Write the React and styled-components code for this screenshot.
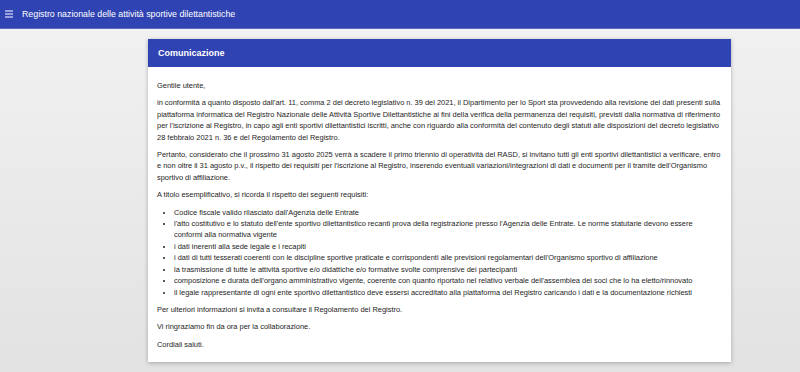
import React from "react";
import styled, { createGlobalStyle } from "styled-components";

const GlobalStyle = createGlobalStyle`
  html, body {
    margin: 0;
    padding: 0;
    height: 100%;
  }
  body {
    font-family: "Liberation Sans", Arial, sans-serif;
    background: linear-gradient(#f2f2f2, #e2e2e2);
    overflow: hidden;
  }
`;

const Page = styled.div`
  width: 800px;
  height: 372px;
  display: flex;
  flex-direction: column;
`;

const TopBar = styled.header`
  height: 28px;
  display: flex;
  align-items: center;
  gap: 8px;
  padding: 0 5px;
  background-color: #3043b2;
  border-bottom: 1px solid #5a6ac4;
  color: #fff;
`;

const Title = styled.span`
  font-size: 8.8px;
`;

const Main = styled.main`
  display: flex;
  justify-content: center;
  padding: 10px 0 0 79px;
`;

const Card = styled.section`
  width: 583px;
  background: #fff;
  box-shadow: 0 1px 4px rgba(0, 0, 0, 0.28);
`;

const CardHeader = styled.div`
  height: 28px;
  display: flex;
  align-items: center;
  padding: 0 10px;
  background-color: #3043b2;
  color: #fff;
  font-size: 9px;
  font-weight: bold;
`;

const CardBody = styled.div`
  padding: 7px 9px 6px;
  color: #1e1e1e;
  font-size: 7.45px;
  line-height: 11.4px;
`;

const Para = styled.p`
  margin: 6px 0;
`;

const List = styled.ul`
  margin: 6px 0;
  padding-left: 17px;
  list-style: disc;
`;

const Menu = () => (
  <svg width="9" height="8" viewBox="0 0 9 8">
    <rect x="0" y="0.5" width="8" height="1" fill="#fff" />
    <rect x="0" y="3.5" width="8" height="1" fill="#fff" />
    <rect x="0" y="6.5" width="8" height="1" fill="#fff" />
  </svg>
);

const requisiti = [
  "Codice fiscale valido rilasciato dall'Agenzia delle Entrate",
  "l'atto costitutivo e lo statuto dell'ente sportivo dilettantistico recanti prova della registrazione presso l'Agenzia delle Entrate. Le norme statutarie devono essere conformi alla normativa vigente",
  "i dati inerenti alla sede legale e i recapiti",
  "i dati di tutti tesserati coerenti con le discipline sportive praticate e corrispondenti alle previsioni regolamentari dell'Organismo sportivo di affiliazione",
  "la trasmissione di tutte le attività sportive e/o didattiche e/o formative svolte comprensive dei partecipanti",
  "composizione e durata dell'organo amministrativo vigente, coerente con quanto riportato nel relativo verbale dell'assemblea dei soci che lo ha eletto/rinnovato",
  "il legale rappresentante di ogni ente sportivo dilettantistico deve essersi accreditato alla piattaforma del Registro caricando i dati e la documentazione richiesti",
];

export default function App() {
  return (
    <Page>
      <GlobalStyle />
      <TopBar>
        <Menu />
        <Title>Registro nazionale delle attività sportive dilettantistiche</Title>
      </TopBar>
      <Main>
        <Card>
          <CardHeader>Comunicazione</CardHeader>
          <CardBody>
            <Para>Gentile utente,</Para>
            <Para>
              in conformità a quanto disposto dall'art. 11, comma 2 del decreto legislativo n. 39 del 2021, il
              Dipartimento per lo Sport sta provvedendo alla revisione dei dati presenti sulla piattaforma informatica
              del Registro Nazionale delle Attività Sportive Dilettantistiche ai fini della verifica della permanenza
              dei requisiti, previsti dalla normativa di riferimento per l'iscrizione al Registro, in capo agli enti
              sportivi dilettantistici iscritti, anche con riguardo alla conformità del contenuto degli statuti alle
              disposizioni del decreto legislativo 28 febbraio 2021 n. 36 e del Regolamento del Registro.
            </Para>
            <Para>
              Pertanto, considerato che il prossimo 31 agosto 2025 verrà a scadere il primo triennio di operatività del
              RASD, si invitano tutti gli enti sportivi dilettantistici a verificare, entro e non oltre il 31 agosto
              p.v., il rispetto dei requisiti per l'iscrizione al Registro, inserendo eventuali variazioni/integrazioni
              di dati e documenti per il tramite dell'Organismo sportivo di affiliazione.
            </Para>
            <Para>A titolo esemplificativo, si ricorda il rispetto dei seguenti requisiti:</Para>
            <List>
              {requisiti.map((r) => (
                <li key={r}>{r}</li>
              ))}
            </List>
            <Para>Per ulteriori informazioni si invita a consultare il Regolamento del Registro.</Para>
            <Para>Vi ringraziamo fin da ora per la collaborazione.</Para>
            <Para>Cordiali saluti.</Para>
          </CardBody>
        </Card>
      </Main>
    </Page>
  );
}
